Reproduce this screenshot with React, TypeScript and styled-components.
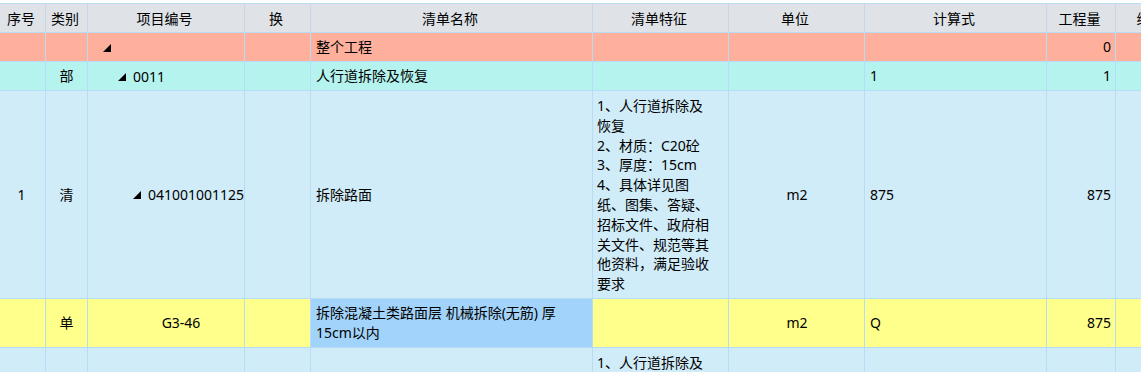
import React from 'react';
import styled, { createGlobalStyle } from 'styled-components';

const GlobalStyle = createGlobalStyle`
  html, body {
    margin: 0;
    padding: 0;
    background: #ffffff;
    overflow: hidden;
  }
  body {
    font-family: "Noto Sans", "Noto Sans CJK SC", sans-serif;
    font-size: 14px;
    color: #000;
  }
`;

const COLS = '45px 41px 156px 65px 281px 135px 135px 181px 68px 100px';

const Sheet = styled.div`
  margin-top: 3px;
  padding-top: 1px;
  width: max-content;
  display: flex;
  flex-direction: column;
  gap: 1px;
  background: #b8dbf6;
`;

const HeaderRow = styled.div`
  display: grid;
  grid-template-columns: ${COLS};
  column-gap: 1px;
  height: 28px;
  background: #c6d7ea;
`;

const HeadCell = styled.div`
  background: #dfe3e8;
  display: flex;
  align-items: center;
  justify-content: center;
  white-space: nowrap;
  overflow: hidden;
  padding-right: 3px;
`;

const Row = styled.div<{ $h: number }>`
  display: grid;
  grid-template-columns: ${COLS};
  column-gap: 1px;
  height: ${(p) => p.$h}px;
`;

const Cell = styled.div<{ $bg: string; $align?: 'left' | 'center' | 'right'; $pl?: number }>`
  background: ${(p) => p.$bg};
  display: flex;
  align-items: center;
  justify-content: ${(p) =>
    p.$align === 'right' ? 'flex-end' : p.$align === 'center' ? 'center' : 'flex-start'};
  padding: 0 4px 0 ${(p) => (p.$pl !== undefined ? p.$pl : 5)}px;
  line-height: 19.8px;
  overflow: hidden;
  white-space: nowrap;
`;

const WrapCell = styled(Cell)`
  white-space: normal;
  line-break: strict;
`;

const FeatureCell = styled(WrapCell)`
  padding: 5px 12px 0 4px;
  align-items: flex-start;
`;

const TreeCell = styled.div<{ $bg: string; $level: number }>`
  background: ${(p) => p.$bg};
  display: flex;
  align-items: center;
  gap: 7px;
  padding-left: ${(p) => 15 + p.$level * 15}px;
  overflow: hidden;
  white-space: nowrap;
`;

const Caret = styled.span`
  flex: none;
  width: 0;
  height: 0;
  border-left: 8px solid transparent;
  border-bottom: 8px solid #000;
  margin-top: 1px;
`;

const ROOT = '#ffb09c';
const PART = '#b4f3ee';
const ITEM = '#d0ecf8';
const QUOTA = '#ffff8c';
const PICKED = '#a2d3fa';

const headers = ['序号', '类别', '项目编号', '换', '清单名称', '清单特征', '单位', '计算式', '工程量', '综合单价'];

const feature =
  '1、人行道拆除及恢复\n2、材质：C20砼\n3、厚度：15cm\n4、具体详见图纸、图集、答疑、招标文件、政府相关文件、规范等其他资料，满足验收要求';

const FeatureText: React.FC = () => (
  <span>
    {feature.split('\n').map((line, i) => (
      <React.Fragment key={i}>
        {i > 0 && <br />}
        {line}
      </React.Fragment>
    ))}
  </span>
);

const App: React.FC = () => {
  return (
    <>
      <GlobalStyle />
      <Sheet>
        <HeaderRow>
          {headers.map((h) => (
            <HeadCell key={h}>{h}</HeadCell>
          ))}
        </HeaderRow>

        <Row $h={28}>
          <Cell $bg={ROOT} />
          <Cell $bg={ROOT} />
          <TreeCell $bg={ROOT} $level={0}>
            <Caret />
          </TreeCell>
          <Cell $bg={ROOT} />
          <Cell $bg={ROOT}>整个工程</Cell>
          <Cell $bg={ROOT} />
          <Cell $bg={ROOT} />
          <Cell $bg={ROOT} />
          <Cell $bg={ROOT} $align="right">0</Cell>
          <Cell $bg={ROOT} />
        </Row>

        <Row $h={28}>
          <Cell $bg={PART} />
          <Cell $bg={PART} $align="center" $pl={4}>部</Cell>
          <TreeCell $bg={PART} $level={1}>
            <Caret />
            0011
          </TreeCell>
          <Cell $bg={PART} />
          <Cell $bg={PART}>人行道拆除及恢复</Cell>
          <Cell $bg={PART} />
          <Cell $bg={PART} />
          <Cell $bg={PART}>1</Cell>
          <Cell $bg={PART} $align="right">1</Cell>
          <Cell $bg={PART} />
        </Row>

        <Row $h={207}>
          <Cell $bg={ITEM} $align="center" $pl={2}>1</Cell>
          <Cell $bg={ITEM} $align="center" $pl={4}>清</Cell>
          <TreeCell $bg={ITEM} $level={2}>
            <Caret />
            041001001125
          </TreeCell>
          <Cell $bg={ITEM} />
          <Cell $bg={ITEM}>拆除路面</Cell>
          <FeatureCell $bg={ITEM}>
            <FeatureText />
          </FeatureCell>
          <Cell $bg={ITEM} $align="center">m2</Cell>
          <Cell $bg={ITEM}>875</Cell>
          <Cell $bg={ITEM} $align="right">875</Cell>
          <Cell $bg={ITEM} />
        </Row>

        <Row $h={48}>
          <Cell $bg={QUOTA} />
          <Cell $bg={QUOTA} $align="center" $pl={4}>单</Cell>
          <Cell $bg={QUOTA} $align="center" $pl={34}>G3-46</Cell>
          <Cell $bg={QUOTA} />
          <WrapCell $bg={PICKED}>拆除混凝土类路面层 机械拆除(无筋) 厚15cm以内</WrapCell>
          <Cell $bg={QUOTA} />
          <Cell $bg={QUOTA} $align="center">m2</Cell>
          <Cell $bg={QUOTA}>Q</Cell>
          <Cell $bg={QUOTA} $align="right">875</Cell>
          <Cell $bg={QUOTA} />
        </Row>

        <Row $h={207}>
          <Cell $bg={ITEM} />
          <Cell $bg={ITEM} />
          <Cell $bg={ITEM} />
          <Cell $bg={ITEM} />
          <Cell $bg={ITEM} />
          <FeatureCell $bg={ITEM}>
            <FeatureText />
          </FeatureCell>
          <Cell $bg={ITEM} />
          <Cell $bg={ITEM} />
          <Cell $bg={ITEM} />
          <Cell $bg={ITEM} />
        </Row>
      </Sheet>
    </>
  );
};

export default App;
